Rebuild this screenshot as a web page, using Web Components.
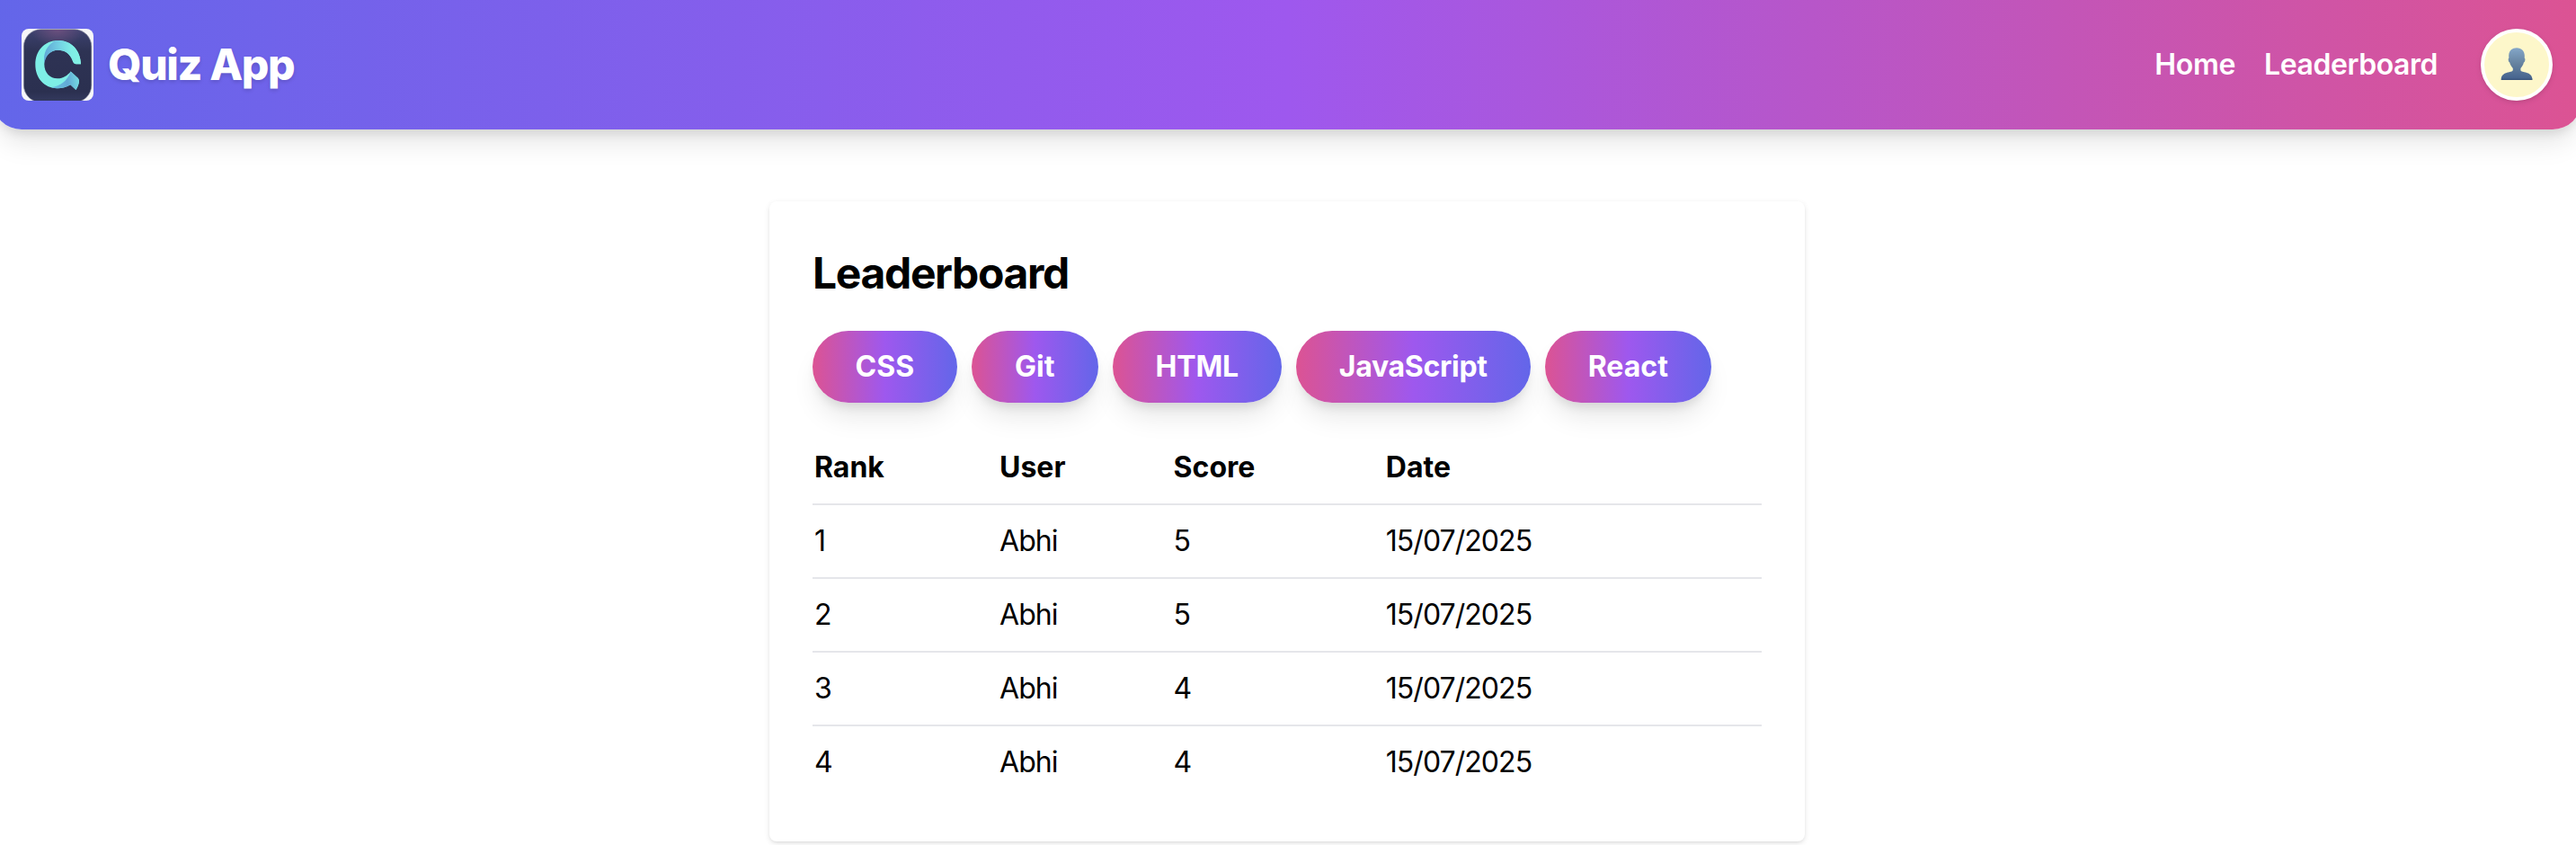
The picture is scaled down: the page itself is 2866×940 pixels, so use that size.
<!DOCTYPE html>
<html lang="en">
<head>
<meta charset="utf-8">
<title>Quiz App</title>
<style>
  html { overflow: hidden; background: #fff; }
  body { margin: 0 -6px 0 -8px; min-height: 940px; color: #000; font: 400 32px/48px Inter, "Liberation Sans", sans-serif; }
</style>
</head>
<body>
<app-header>
  <app-logo slot="logo"></app-logo>
  <span slot="title">Quiz App</span>
  <nav-link slot="nav" style="letter-spacing:-.35px">Home</nav-link>
  <nav-link slot="nav" style="letter-spacing:-.45px">Leaderboard</nav-link>
  <user-avatar slot="user"></user-avatar>
</app-header>
<leader-card>
  <span slot="title">Leaderboard</span>
  <topic-button slot="topics" style="--w:160.8px;letter-spacing:.1px">CSS</topic-button>
  <topic-button slot="topics" style="--w:141px">Git</topic-button>
  <topic-button slot="topics" style="--w:188px;letter-spacing:-.19px">HTML</topic-button>
  <topic-button slot="topics" style="--w:261px;letter-spacing:-.29px">JavaScript</topic-button>
  <topic-button slot="topics" style="--w:185px">React</topic-button>
  <score-table slot="table"></score-table>
</leader-card>
<script>
const define = (name, html, setup) => customElements.define(name, class extends HTMLElement {
  constructor() {
    super();
    const root = this.attachShadow({ mode: 'open' });
    root.innerHTML = html;
    if (setup) setup(root);
  }
});

define('app-logo', `
<style>:host{display:block;width:80px;height:80px;border-radius:8px;overflow:hidden}svg{display:block}</style>
<svg width="80" height="80" viewBox="0 0 80 80">
  <defs>
    <linearGradient id="tile" x1="0" y1="0" x2="0" y2="1"><stop offset="0" stop-color="#3d4270"/><stop offset=".3" stop-color="#2e3354"/><stop offset=".85" stop-color="#2b3050"/><stop offset="1" stop-color="#343a5f"/></linearGradient>
    <radialGradient id="glow" cx=".5" cy="0" r=".4" gradientTransform="scale(1 .6)"><stop offset="0" stop-color="#6b4f7d"/><stop offset="1" stop-color="#6b4f7d" stop-opacity="0"/></radialGradient>
    <linearGradient id="ring" x1="25" y1="0" x2="66" y2="0" gradientUnits="userSpaceOnUse"><stop offset="0" stop-color="#5fa6d6"/><stop offset=".45" stop-color="#74d4e4"/><stop offset=".75" stop-color="#7feee6"/><stop offset="1" stop-color="#83f2e4"/></linearGradient>
    <linearGradient id="tail" x1="38" y1="60" x2="64" y2="58" gradientUnits="userSpaceOnUse"><stop offset="0" stop-color="#67bfe0"/><stop offset=".5" stop-color="#62a9d6"/><stop offset="1" stop-color="#74dbe2"/></linearGradient>
  </defs>
  <rect width="80" height="80" fill="#f6f6f8"/>
  <rect x="2.4" y=".8" width="75.4" height="81" rx="19" fill="url(#tile)" stroke="#85889b" stroke-width=".7"/>
  <rect x="2.8" y="1" width="74.6" height="79" rx="19" fill="url(#glow)"/>
  <path d="M66 39.2H61C58.2 39.2 57.4 37.6 56.4 34.5C53.5 27.5 48 23.7 40.5 23.7C31.5 23.7 25.3 30.5 25.3 39.5C25.3 48.8 31.5 55.3 40 55.3C46.5 55.3 51 52 54.7 47.5L62.6 54.8C65.6 58 63 63.5 60.5 68L54.3 62.3C50 65 45.5 66.2 40 66.2C25 66.2 15.3 54.5 15.3 39.7C15.3 24.5 25.5 13 40.5 13C54.5 13 65.5 23.5 66 39.2Z" fill="#7eeee6"/>
  <path d="M25.5 38C23.5 28 28 18 38 13.1C55 11.5 65.5 23.5 66 39.2H61C58.2 39.2 57.4 37.6 56.4 34.5C53.5 27.5 48 23.7 40.5 23.7C33 23.7 27 29 25.5 38Z" fill="url(#ring)"/>
  <path d="M54.7 47.5L62.6 54.8C65.6 58 63 63.5 60.5 68L54.3 62.3C47 67 38 67 33 65C43 64 51 58 54.7 47.5Z" fill="url(#tail)"/>
</svg>`);

define('nav-link', `<style>:host{display:block;font-weight:600;color:#fff}</style><slot></slot>`);

define('user-avatar', `
<style>:host{display:flex;align-items:center;justify-content:center;box-sizing:border-box;width:80px;height:80px;border:4px solid #fff;border-radius:50%;background:#fdf7ca;box-shadow:0 2px 6px rgba(0,0,0,.1),0 2px 4px -2px rgba(0,0,0,.1)}svg{display:block}</style>
<svg width="40" height="40" viewBox="-20 -20 40 40">
  <defs><linearGradient id="bust" x1="0" y1="-19" x2="0" y2="17" gradientUnits="userSpaceOnUse"><stop offset="0" stop-color="#84a7c9"/><stop offset=".5" stop-color="#66829f"/><stop offset=".93" stop-color="#486690"/><stop offset="1" stop-color="#38527a"/></linearGradient></defs>
  <path d="M0-18.7C5.5-18.7 8.8-15 8.8-10C8.8-8.8 8.7-8 8.7-7.4C9.8-7.3 9.6-3.5 7.9-2.4C7.2.5 6 2.2 4.4 3.9V6.3C5.5 9.2 16.2 7 17.5 15.7C17.6 16.5 17.6 16.9 17.2 16.9H-17C-17.5 16.9-17.5 16.5-17.3 15.7C-16 7-5.3 9.2-4.2 6.3V3.9C-5.8 2.2-7.1.5-7.8-2.4C-9.5-3.5-9.7-7.3-8.6-7.4C-8.6-8-8.8-8.8-8.8-10C-8.8-15-5.5-18.7 0-18.7Z" fill="url(#bust)"/>
</svg>`);

define('app-header', `
<style>
:host{display:flex;align-items:center;box-sizing:border-box;height:144px;padding:0 32px;color:#fff;border-radius:0 0 32px 32px;
 background:linear-gradient(to right,#6366e9,#9e58ee 50%,#dc5393);box-shadow:0 20px 30px -6px rgba(0,0,0,.1),0 8px 12px -4px rgba(0,0,0,.1)}
.brand{display:flex;align-items:center;gap:16px;font:800 48px/64px Inter,"Liberation Sans",sans-serif;letter-spacing:-1.36px;text-shadow:0 2px 4px rgba(0,0,0,.15)}
nav{display:flex;gap:32px;margin:0 48px 0 auto}
</style>
<div class="brand"><slot name="logo"></slot><slot name="title"></slot></div>
<nav><slot name="nav"></slot></nav>
<slot name="user"></slot>`);

define('topic-button', `
<style>:host{display:block}
button{all:unset;box-sizing:border-box;display:flex;align-items:center;justify-content:center;width:var(--w);height:80px;border-radius:40px;color:#fff;font-weight:700;
 background:linear-gradient(to right,#dc5393,#9e58ee 50%,#6366e9);box-shadow:0 20px 30px -6px rgba(0,0,0,.1),0 8px 12px -4px rgba(0,0,0,.1)}</style>
<button><slot></slot></button>`);

define('leader-card', `
<style>
:host{display:block;box-sizing:border-box;width:1152px;height:712px;margin:80px auto 0;padding:48px;border-radius:8px;background:#fff;box-shadow:0 2px 6px rgba(0,0,0,.1),0 2px 4px -2px rgba(0,0,0,.1)}
h2{margin:0 0 32px;font:700 48px/64px Inter,"Liberation Sans",sans-serif;letter-spacing:-1.36px}
.topics{display:flex;gap:16px;margin-bottom:32px}
</style>
<h2><slot name="title"></slot></h2>
<div class="topics"><slot name="topics"></slot></div>
<slot name="table"></slot>`);

define('score-table', `
<style>
:host{display:block}
.row{display:grid;grid-template-columns:206px 193.6px 236.2px 1fr;padding:16px 2px;border-bottom:2px solid #e5e6ea;font-weight:400;letter-spacing:-.95px}
.row:last-child{border:0}
.head{font-weight:700;letter-spacing:0}
</style>
<div class="table"><div class="row head"><span>Rank</span><span>User</span><span>Score</span><span>Date</span></div></div>`, root => {
  const table = root.querySelector('.table');
  for (const cells of [[1, 'Abhi', 5], [2, 'Abhi', 5], [3, 'Abhi', 4], [4, 'Abhi', 4]]) {
    const row = document.createElement('div');
    row.className = 'row';
    for (const value of [...cells, '15/07/2025']) {
      const cell = document.createElement('span');
      cell.textContent = value;
      row.append(cell);
    }
    table.append(row);
  }
});
</script>
</body>
</html>
